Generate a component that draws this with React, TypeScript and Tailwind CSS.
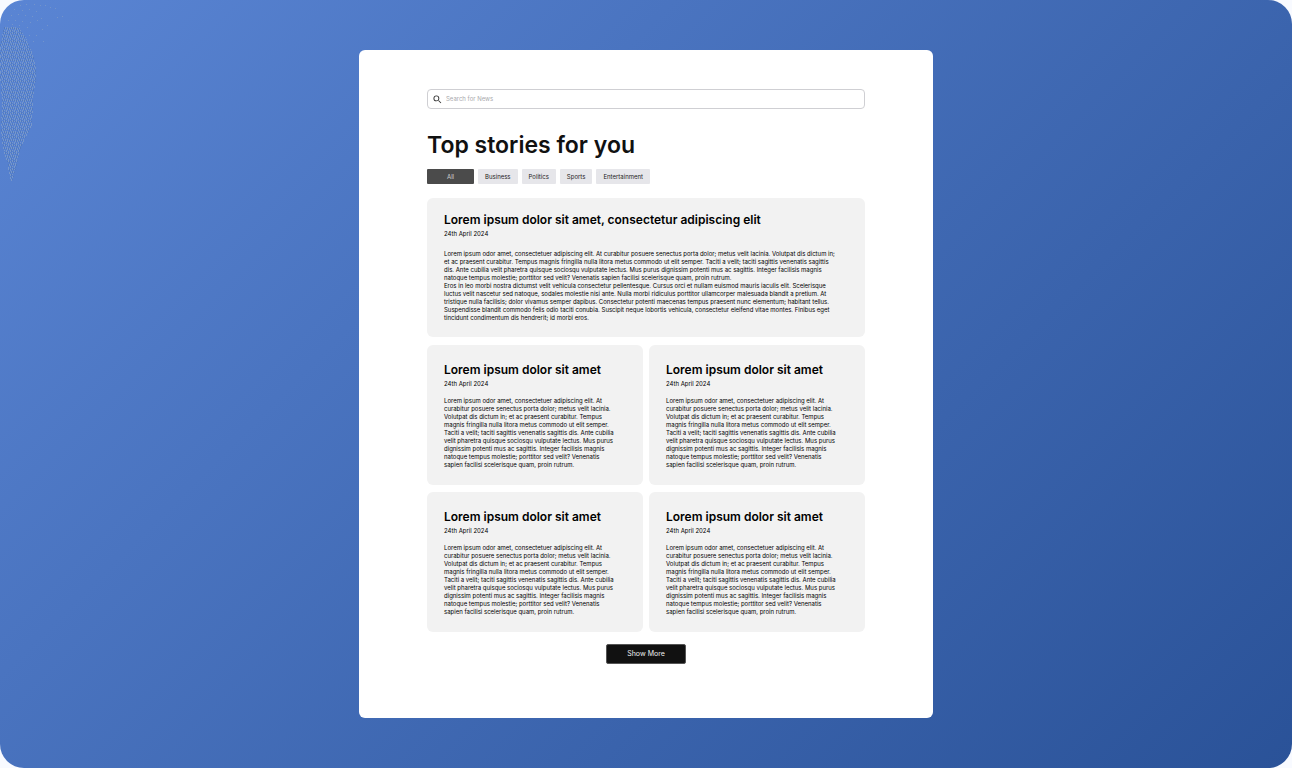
import { useState } from 'react';

const TOPICS = ['All', 'Business', 'Politics', 'Sports', 'Entertainment'];

const INTRO =
  'Lorem ipsum odor amet, consectetuer adipiscing elit. At curabitur posuere senectus porta dolor; metus velit lacinia. Volutpat dis dictum in; et ac praesent curabitur. Tempus magnis fringilla nulla litora metus commodo ut elit semper. Taciti a velit; taciti sagittis venenatis sagittis dis. Ante cubilia velit pharetra quisque sociosqu vulputate lectus. Mus purus dignissim potenti mus ac sagittis. Integer facilisis magnis natoque tempus molestie; porttitor sed velit? Venenatis sapien facilisi scelerisque quam, proin rutrum.';

const FOLLOW_UP =
  'Eros in leo morbi nostra dictumst velit vehicula consectetur pellentesque. Cursus orci et nullam euismod mauris iaculis elit. Scelerisque luctus velit nascetur sed natoque, sodales molestie nisi ante. Nulla morbi ridiculus porttitor ullamcorper malesuada blandit a pretium. At tristique nulla facilisis; dolor vivamus semper dapibus. Consectetur potenti maecenas tempus praesent nunc elementum; habitant tellus. Suspendisse blandit commodo felis odio taciti conubia. Suscipit neque lobortis vehicula, consectetur eleifend vitae montes. Finibus eget tincidunt condimentum dis hendrerit; id morbi eros.';

type Story = { id: number; title: string; date: string; body: string[] };

const LEAD: Story = {
  id: 0,
  title: 'Lorem ipsum dolor sit amet, consectetur adipiscing elit',
  date: '24th April 2024',
  body: [INTRO, FOLLOW_UP],
};

const STORIES: Story[] = [1, 2, 3, 4].map((id) => ({
  id,
  title: 'Lorem ipsum dolor sit amet',
  date: '24th April 2024',
  body: [INTRO],
}));

// Speckled grain over the light corner of the backdrop.
function Grain() {
  return (
    <svg
      aria-hidden="true"
      width="70"
      height="190"
      shapeRendering="crispEdges"
      className="pointer-events-none absolute top-0 left-0"
    >
      <defs>
        <pattern id="grain" width="8" height="8" patternUnits="userSpaceOnUse">
          <path
            fill="#7697cc"
            d="M0 0h1v2h-1zM2 1h1v2h-1zM4 0h1v2h-1zM6 1h1v1h-1zM3 3h1v2h-1zM1 4h1v2h-1zM5 3h1v2h-1zM7 3h1v3h-1zM0 7h1v1h-1zM2 6h1v2h-1zM4 6h1v1h-1zM6 6h1v2h-1z"
          />
          <path
            fill="#5079bf"
            d="M1 1h1v2h-1zM3 1h1v1h-1zM5 0h1v2h-1zM7 1h1v1h-1zM4 3h1v2h-1zM2 4h1v1h-1zM0 4h1v2h-1zM6 4h1v1h-1zM3 6h1v2h-1zM7 7h1v1h-1z"
          />
        </pattern>
      </defs>
      <path
        fill="url(#grain)"
        d="M4 27H19L26 38 32 52 36 66V78L33 100 32 126 26 137 20 150 16 170 12 182 9 176 8 165 4 152 1 135 2 100 0 75V45Z"
      />
      <path
        fill="#7394cb"
        d="M20 5h1v1h-1zM26 4h1v1h-1zM34 4h1v1h-1zM40 5h1v1h-1zM45 5h1v1h-1zM50 7h1v1h-1zM55 8h1v1h-1zM62 16h1v1h-1zM57 17h1v1h-1zM14 9h1v1h-1zM22 10h1v1h-1zM29 9h1v1h-1zM36 11h1v1h-1zM11 15h1v1h-1zM18 14h1v1h-1zM25 15h1v1h-1zM32 16h1v1h-1zM41 18h1v1h-1zM8 20h1v1h-1zM15 20h1v1h-1zM22 21h1v1h-1zM30 22h1v1h-1zM37 20h1v1h-1zM47 25h1v1h-1zM12 24h1v1h-1zM19 25h1v1h-1zM27 27h1v1h-1zM42 29h1v1h-1zM29 35h1v1h-1zM36 35h1v1h-1zM33 41h1v1h-1zM43 41h1v1h-1z"
      />
    </svg>
  );
}

function StoryCard({ story, lead = false }: { story: Story; lead?: boolean }) {
  return (
    <article
      className={`rounded-md bg-[#f2f2f2] pl-[17px] text-black ${
        lead ? 'pt-[13px] pr-[25px] pb-[15px]' : 'pt-4 pr-[25px] pb-4'
      }`}
    >
      <h2 className="text-[12px] leading-[18px] font-semibold">{story.title}</h2>
      <p className="mt-px text-[6px] leading-[8px]">{story.date}</p>
      <div className={`text-[6px] leading-[8px] ${lead ? 'mt-3' : 'mt-[9px]'}`}>
        {story.body.map((text) => (
          <p key={text}>{text}</p>
        ))}
      </div>
    </article>
  );
}

export default function App() {
  const [topic, setTopic] = useState('All');

  return (
    <div className="min-h-screen bg-[#f8faff] font-['Inter',sans-serif]">
      <div className="relative flex min-h-screen items-center justify-center overflow-hidden rounded-[24px] bg-linear-135 from-[#5a85d4] to-[#2a5298] py-[50px]">
        <Grain />
        <main className="w-full max-w-[574px] rounded-md bg-white px-[68px] pt-[39px] pb-[54px]">
          <label className="flex h-5 items-center gap-1 rounded-[4px] border border-[#cfcfd3] px-[5px]">
            <svg viewBox="2 2 20 20" className="size-[9px] shrink-0" fill="#333" aria-hidden="true">
              <path d="M15.5 14h-.79l-.28-.27A6.47 6.47 0 0 0 16 9.5 6.5 6.5 0 1 0 9.5 16c1.61 0 3.09-.59 4.23-1.57l.27.28v.79l5 4.99L20.49 19l-4.99-5zm-6 0a4.5 4.5 0 1 1 0-9 4.5 4.5 0 0 1 0 9z" />
            </svg>
            <input
              type="search"
              aria-label="Search for News"
              placeholder="Search for News"
              className="w-full bg-transparent text-[6px] leading-[8px] outline-none placeholder:text-[#a9a9ad]"
            />
          </label>

          <h1 className="mt-5 text-[23px] leading-8 font-semibold text-[#111]">Top stories for you</h1>

          <div className="mt-2 flex gap-1">
            {TOPICS.map((name) => (
              <button
                key={name}
                type="button"
                aria-pressed={topic === name}
                onClick={() => setTopic(name)}
                className={`h-[15px] rounded-[1px] text-[6px] leading-[8px] ${
                  topic === name ? 'bg-[#4b4b4b] px-5 text-[#d0d0d0]' : 'bg-[#e6e6ea] px-[7px] text-[#222]'
                }`}
              >
                {name}
              </button>
            ))}
          </div>

          <section className="mt-[14px] flex flex-col gap-2">
            <StoryCard story={LEAD} lead />
            <div className="grid grid-cols-2 gap-x-[6px] gap-y-[7px]">
              {STORIES.map((story) => (
                <StoryCard key={story.id} story={story} />
              ))}
            </div>
          </section>

          <button
            type="button"
            className="mx-auto mt-3 block h-5 w-20 rounded-[2px] border border-[#555] bg-[#111] text-[7px] leading-[8px] text-[#eee]"
          >
            Show More
          </button>
        </main>
      </div>
    </div>
  );
}
